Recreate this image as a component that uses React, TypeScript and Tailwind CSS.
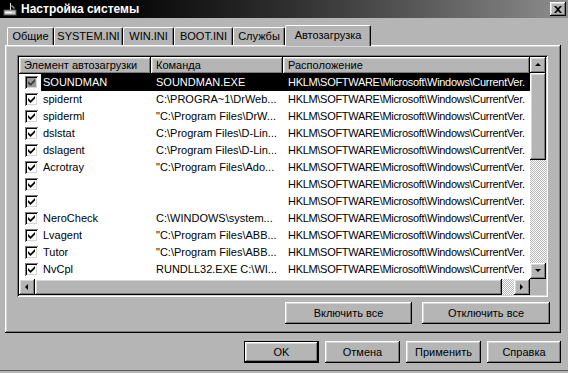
import React from 'react';

const raised =
  'shadow-[inset_-1px_-1px_0_#000,inset_1px_1px_0_#fff,inset_-2px_-2px_0_#7b7b7b,inset_2px_2px_0_#d6d6d6]';
const sunken =
  'shadow-[inset_1px_1px_0_#7b7b7b,inset_-1px_-1px_0_#fff,inset_2px_2px_0_#000,inset_-2px_-2px_0_#d6d6d6]';
const checker =
  'bg-[repeating-conic-gradient(#ffffff_0%_25%,#b5b5b5_0%_50%)] bg-[length:2px_2px]';

const HKLM = 'HKLM\\SOFTWARE\\Microsoft\\Windows\\CurrentVer.';

const rows = [
  { name: 'SOUNDMAN', cmd: 'SOUNDMAN.EXE', selected: true },
  { name: 'spidernt', cmd: 'C:\\PROGRA~1\\DrWeb...' },
  { name: 'spiderml', cmd: '"C:\\Program Files\\DrW...' },
  { name: 'dslstat', cmd: 'C:\\Program Files\\D-Lin...' },
  { name: 'dslagent', cmd: 'C:\\Program Files\\D-Lin...' },
  { name: 'Acrotray', cmd: '"C:\\Program Files\\Ado...' },
  { name: '', cmd: '' },
  { name: '', cmd: '' },
  { name: 'NeroCheck', cmd: 'C:\\WINDOWS\\system...' },
  { name: 'Lvagent', cmd: '"C:\\Program Files\\ABB...' },
  { name: 'Tutor', cmd: '"C:\\Program Files\\ABB...' },
  { name: 'NvCpl', cmd: 'RUNDLL32.EXE C:\\WI...' },
];

const tabs = [
  { label: 'Общие', w: 'w-[47px]' },
  { label: 'SYSTEM.INI', w: 'w-[69px]' },
  { label: 'WIN.INI', w: 'w-[51px]' },
  { label: 'BOOT.INI', w: 'w-[59px]' },
  { label: 'Службы', w: 'w-[52px]' },
];

const Checkbox = ({ dim }: { dim?: boolean }) => (
  <div className={`w-[13px] h-[13px] ${sunken} ${dim ? 'bg-[#9a9a9a]' : 'bg-white'} flex items-center justify-center`}>
    <svg width="7" height="7" viewBox="0 0 7 7">
      <path d="M0 2 L2.5 4.5 L7 0 L7 2.5 L2.5 7 L0 4.5 Z" fill={dim ? '#3a3a3a' : '#000'} />
    </svg>
  </div>
);

const ArrowBtn = ({ dir }: { dir: 'up' | 'down' | 'left' | 'right' }) => {
  const pts = {
    up: '1,5 4,2 7,5',
    down: '1,2 4,5 7,2',
    left: '5,1 2,4 5,7',
    right: '2,1 5,4 2,7',
  }[dir];
  return (
    <div className={`w-[16px] h-[16px] shrink-0 bg-[#b5b5b5] ${raised} flex items-center justify-center`}>
      <svg width="8" height="8" viewBox="0 0 8 8">
        <polygon points={pts} fill="#000" />
      </svg>
    </div>
  );
};

const Button = ({ label, w, isDefault }: { label: string; w: string; isDefault?: boolean }) => (
  <div className={`${w} h-[22px] ${isDefault ? 'border border-black' : ''}`}>
    <div className={`w-full h-full ${raised} bg-[#b5b5b5] flex items-center justify-center`}>{label}</div>
  </div>
);

export default function App() {
  return (
    <div className="w-[568px] h-[373px] bg-[#b5b5b5] font-['Liberation_Sans',Arial,sans-serif] text-[11px] text-black overflow-hidden flex flex-col">
      {/* Title bar */}
      <div className="h-[18px] shrink-0 flex items-center bg-gradient-to-r from-black via-[#2e2e2e] to-[#8e8e8e] pl-[3px] pr-[2px]">
        <svg width="15" height="14" viewBox="0 0 15 14" className="shrink-0">
          <rect x="1" y="8" width="12" height="5" fill="#c8c8c8" stroke="#555" strokeWidth="1" />
          <rect x="2" y="10" width="7" height="1" fill="#fff" />
          <path d="M7 1 L8 1 L8 8 L7 8 Z" fill="#e0e0e0" />
          <path d="M9 3 L12 6 L11 7 L8 4 Z" fill="#9a9a9a" />
        </svg>
        <span className="ml-[3px] text-white font-bold text-[12px] leading-none">Настройка системы</span>
        <div className="flex-1" />
        <div className={`w-[16px] h-[14px] bg-[#b5b5b5] ${raised} flex items-center justify-center`}>
          <svg width="8" height="7" viewBox="0 0 8 7">
            <path d="M0 0 L2 0 L4 2 L6 0 L8 0 L5 3.5 L8 7 L6 7 L4 5 L2 7 L0 7 L3 3.5 Z" fill="#000" />
          </svg>
        </div>
      </div>

      <div className="flex flex-col pl-[5px] pr-[7px] pt-[7px]">
        {/* Tabs */}
        <div className="h-[20px] flex items-end pl-[2px]">
          {tabs.map((t) => (
            <div
              key={t.label}
              className={`${t.w} h-[18px] border-l border-t border-white border-r border-r-black rounded-t-[2px] shadow-[inset_-1px_0_0_#7b7b7b] flex items-center justify-center`}
            >
              {t.label}
            </div>
          ))}
          <div className="relative z-10 w-[86px] h-[21px] -mb-px bg-[#b5b5b5] border-l border-t border-white border-r border-r-black rounded-t-[2px] shadow-[inset_-1px_0_0_#7b7b7b] flex items-center justify-center pb-[2px]">
            Автозагрузка
          </div>
        </div>

        {/* Panel */}
        <div className={`h-[288px] ${raised} pl-[12px] pt-[10px] pr-[11px] flex flex-col`}>
          <div className={`w-[531px] h-[242px] ${sunken} p-[2px] flex`}>
            <div className="w-[511px] flex flex-col">
              {/* Header */}
              <div className="h-[17px] flex shrink-0">
                <div className={`w-[132px] ${raised} pl-[5px] flex items-center`}>Элемент автозагрузки</div>
                <div className={`w-[132px] ${raised} pl-[5px] flex items-center`}>Команда</div>
                <div className={`flex-1 ${raised} pl-[5px] flex items-center`}>Расположение</div>
              </div>
              {/* Rows */}
              <div className="flex-1 bg-white flex flex-col">
                {rows.map((r, i) => (
                  <div key={i} className="h-[17px] flex items-center">
                    <div className="w-[22px] pl-[6px] shrink-0">
                      <Checkbox dim={r.selected} />
                    </div>
                    <div className={`flex-1 h-full flex items-center whitespace-nowrap overflow-hidden ${r.selected ? 'bg-black text-white' : ''}`}>
                      <div className="w-[110px] pl-[2px] shrink-0">{r.name}</div>
                      <div className="w-[132px] pl-[5px] shrink-0">{r.cmd}</div>
                      <div className="flex-1 pl-[5px] tracking-[-0.3px]">{HKLM}</div>
                    </div>
                  </div>
                ))}
              </div>
              {/* Horizontal scrollbar */}
              <div className="h-[16px] flex shrink-0">
                <ArrowBtn dir="left" />
                <div className={`w-[467px] ${raised} bg-[#b5b5b5]`} />
                <div className={`flex-1 ${checker}`} />
                <ArrowBtn dir="right" />
              </div>
            </div>
            {/* Vertical scrollbar */}
            <div className="w-[16px] flex flex-col">
              <ArrowBtn dir="up" />
              <div className={`h-[87px] ${raised} bg-[#b5b5b5]`} />
              <div className={`flex-1 ${checker}`} />
              <ArrowBtn dir="down" />
              <div className="h-[16px] bg-[#b5b5b5]" />
            </div>
          </div>
          <div className="flex justify-end gap-[10px] mt-[5px]">
            <Button label="Включить все" w="w-[127px]" />
            <Button label="Отключить все" w="w-[128px]" />
          </div>
        </div>

        {/* Dialog buttons */}
        <div className="flex justify-end gap-[6px] mt-[8px]">
          <Button label="OK" w="w-[75px]" isDefault />
          <Button label="Отмена" w="w-[75px]" />
          <Button label="Применить" w="w-[75px]" />
          <Button label="Справка" w="w-[74px]" />
        </div>
      </div>
      <div className="mt-auto mb-[2px] h-px bg-[#5e5e5e]" />
    </div>
  );
}
